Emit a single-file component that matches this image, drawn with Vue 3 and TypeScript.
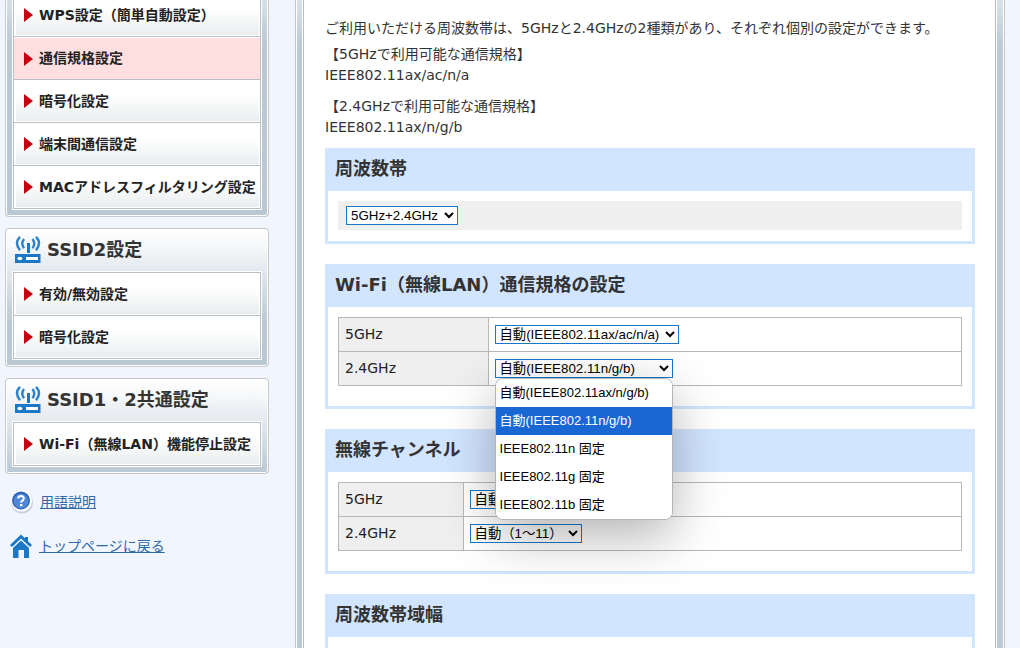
<script setup lang="ts">
import { ref } from 'vue'

interface MenuItem {
  label: string
  active?: boolean
}
interface MenuGroup {
  title?: string
  items: MenuItem[]
}

const groups: MenuGroup[] = [
  {
    items: [
      { label: 'WPS設定（簡単自動設定）' },
      { label: '通信規格設定', active: true },
      { label: '暗号化設定' },
      { label: '端末間通信設定' },
      { label: 'MACアドレスフィルタリング設定' },
    ],
  },
  { title: 'SSID2設定', items: [{ label: '有効/無効設定' }, { label: '暗号化設定' }] },
  { title: 'SSID1・2共通設定', items: [{ label: 'Wi-Fi（無線LAN）機能停止設定' }] },
]

const standards24 = [
  '自動(IEEE802.11ax/n/g/b)',
  '自動(IEEE802.11n/g/b)',
  'IEEE802.11n 固定',
  'IEEE802.11g 固定',
  'IEEE802.11b 固定',
]
const standard24 = ref(standards24[1])
const listOpen = ref(true)

function choose(option: string) {
  standard24.value = option
  listOpen.value = false
}
</script>

<template>
  <div class="page">
    <aside class="sidebar">
      <nav v-for="(group, g) in groups" :key="g" class="box" :class="{ continued: !group.title }">
        <h2 v-if="group.title" class="box-title">
          <svg class="router" viewBox="0 0 26 28" width="26" height="28" aria-hidden="true">
            <rect x="0" y="18" width="25.500" height="9" fill="#1a78c6" />
            <ellipse cx="4.800" cy="22.500" rx="2.500" ry="1.700" fill="#fff" />
            <rect x="11" y="21" width="12" height="3" fill="#fff" />
            <rect x="12" y="7" width="3" height="10" fill="#1a78c6" />
            <g fill="none" stroke="#2b82c9" stroke-width="2.400">
              <path d="M5 .8Q-1 7 5 14.200M9 3Q5.500 7.500 9 12.200" />
              <path d="M21 .8Q27 7 21 14.200M17.500 3Q21 7.500 17.500 12.200" />
            </g>
          </svg>
          {{ group.title }}
        </h2>
        <ul class="menu">
          <li v-for="item in group.items" :key="item.label">
            <a href="#" class="menu-link" :class="{ active: item.active }">{{ item.label }}</a>
          </li>
        </ul>
      </nav>

      <div class="links">
        <a href="#" class="help-link">
          <svg viewBox="0 0 24 26" width="24" height="26" aria-hidden="true">
            <circle cx="12" cy="13.500" r="11" fill="#b9c3d6" opacity=".7" />
            <circle cx="11.500" cy="12" r="10.500" fill="#fff" />
            <circle cx="11" cy="11.500" r="9" fill="#2c61b4" />
            <circle cx="11" cy="12" r="7.500" fill="#4f88d6" />
            <path d="M8.200 9.500Q8.200 7 11 7T13.800 9.500Q13.800 11 11.200 12.500V13.500" fill="none" stroke="#fff" stroke-width="2" />
            <rect x="10" y="15" width="2.400" height="2.200" fill="#fff" />
          </svg>
          <span>用語説明</span>
        </a>
        <a href="#" class="home-link">
          <svg viewBox="0 0 22 24" width="22" height="24" aria-hidden="true">
            <path d="M1 12L11 2.500L21 12" fill="none" stroke="#1a78c6" stroke-width="3" />
            <path d="M15 3h3v5h-3zM3 14l8-7.500L19 14v10h-5v-8H8.500v8H3z" fill="#1a78c6" />
          </svg>
          <span>トップページに戻る</span>
        </a>
      </div>
    </aside>

    <div class="frame">
      <div class="band">
        <main class="content">
          <p>ご利用いただける周波数帯は、5GHzと2.4GHzの2種類があり、それぞれ個別の設定ができます。</p>
          <p>【5GHzで利用可能な通信規格】<br />IEEE802.11ax/ac/n/a</p>
          <p>【2.4GHzで利用可能な通信規格】<br />IEEE802.11ax/n/g/b</p>

          <section class="panel">
            <h2>周波数帯</h2>
            <div class="panel-body tight">
              <div class="strip">
                <select aria-label="周波数帯">
                  <option>5GHz+2.4GHz</option>
                </select>
              </div>
            </div>
          </section>

          <section class="panel">
            <h2>Wi-Fi（無線LAN）通信規格の設定</h2>
            <div class="panel-body">
              <table class="wide-head">
                <tbody>
                  <tr>
                    <th scope="row"><label for="std5">5GHz</label></th>
                    <td>
                      <select id="std5">
                        <option>自動(IEEE802.11ax/ac/n/a)</option>
                      </select>
                    </td>
                  </tr>
                  <tr>
                    <th scope="row"><label for="std24">2.4GHz</label></th>
                    <td>
                      <div class="dropdown">
                        <select id="std24" v-model="standard24">
                          <option v-for="s in standards24" :key="s">{{ s }}</option>
                        </select>
                        <div v-if="listOpen" class="popup" role="listbox" aria-label="2.4GHz">
                          <button
                            v-for="s in standards24"
                            :key="s"
                            type="button"
                            role="option"
                            :aria-selected="s === standard24"
                            :class="{ chosen: s === standard24 }"
                            @click="choose(s)"
                          >{{ s }}</button>
                        </div>
                      </div>
                    </td>
                  </tr>
                </tbody>
              </table>
            </div>
          </section>

          <section class="panel">
            <h2>無線チャンネル</h2>
            <div class="panel-body">
              <table class="narrow-head">
                <tbody>
                  <tr>
                    <th scope="row"><label for="ch5">5GHz</label></th>
                    <td>
                      <select id="ch5">
                        <option>自動</option>
                      </select>
                    </td>
                  </tr>
                  <tr>
                    <th scope="row"><label for="ch24">2.4GHz</label></th>
                    <td>
                      <select id="ch24">
                        <option>自動（1～11）</option>
                      </select>
                    </td>
                  </tr>
                </tbody>
              </table>
            </div>
          </section>

          <section class="panel">
            <h2>周波数帯域幅</h2>
            <div class="panel-body"></div>
          </section>
        </main>
      </div>
    </div>
  </div>
</template>

<style>
body {
  margin: 0;
  background: #f0f5fe;
}
</style>

<style scoped>
* {
  box-sizing: border-box;
}
.page {
  display: flex;
  gap: 26px;
  height: 100vh;
  padding: 0 15px 0 5px;
  overflow: hidden;
  color: #333;
  font: 14px/21px "DejaVu Sans", "Noto Sans CJK JP", sans-serif;
}
.sidebar {
  flex: none;
  width: 264px;
}
.box {
  margin-bottom: 11px;
  padding: 0 6px 6px;
  border: 1px solid #c8c8c8;
  border-radius: 4px;
  background: linear-gradient(#fff 0, #f4f6f8 20px, #b9c8d3 95px);
  box-shadow: inset 0 0 0 1px #fff;
}
.box.continued {
  margin-top: -8px;
  border-top: 0;
  border-radius: 0 0 4px 4px;
  background: linear-gradient(#dce4ea 0, #b9c8d3 53px);
}
.box-title {
  display: flex;
  align-items: center;
  gap: 6px;
  height: 42px;
  margin: 0;
  padding: 0 0 1px 3px;
  font-size: 18px;
  line-height: 27px;
  white-space: nowrap;
}
.router {
  flex: none;
}
.menu {
  margin: 0;
  padding: 0;
  list-style: none;
  border: 1px solid #fff;
}
.menu li {
  border: 1px solid #b9bfc3;
  border-top: 0;
  background: #fff;
  padding: 1px 1px 1px 2px;
}
.menu li:first-child {
  border-top: 1px solid #b9bfc3;
}
.menu-link {
  display: flex;
  align-items: center;
  gap: 6px;
  height: 40px;
  padding-left: 8px;
  color: #222;
  font-weight: bold;
  text-decoration: none;
  white-space: nowrap;
  background: linear-gradient(#fff 35%, #e9edee);
}
.menu-link::before {
  content: "";
  border: solid transparent;
  border-width: 7px 0 7px 9px;
  border-left-color: #c7000f;
}
.menu li:has(.active) {
  padding: 1px 0 0;
}
.menu-link.active {
  height: 41px;
  padding-left: 10px;
  background: #ffdfe0;
}
.links {
  display: flex;
  flex-direction: column;
  gap: 18px;
  padding: 4px 5px 0;
}
.links a {
  display: flex;
  align-items: center;
  height: 26px;
  color: #2f6aa8;
}
.help-link {
  gap: 6px;
}
.home-link {
  gap: 7px;
}
.frame {
  flex: 1;
  min-width: 0;
  padding: 0 1px;
  border: solid #c4c4c4;
  border-width: 0 1px;
  background: #fff;
}
.band {
  height: 100%;
  padding: 0 6px 0 5px;
  background: linear-gradient(#dae2e9, #bccad5 45px);
}
.content {
  height: 100%;
  padding: 18px 21px 0 22px;
  border: solid #fff;
  border-width: 0 1px;
  background: #fff;
  box-shadow: inset 1px 0 #bbb, inset -1px 0 #bbb;
}
p {
  margin: 0 0 10px;
}
p:first-child {
  margin-bottom: 5px;
}
.panel {
  margin-bottom: 20px;
  border: solid #d2e5ff;
  border-width: 0 3px 3px;
}
.panel h2 {
  margin: 0;
  padding: 7px 7px 9px;
  background: #d2e5ff;
  font-size: 18px;
  line-height: 27px;
}
.panel-body {
  padding: 10px 10px 20px;
}
.panel-body.tight {
  padding-bottom: 11px;
}
.strip {
  display: flex;
  align-items: center;
  height: 29px;
  padding: 0 8px;
  background: #efefef;
}
table {
  width: 100%;
  border-collapse: collapse;
  table-layout: fixed;
  color: #222;
}
th,
td {
  height: 34px;
  padding: 0 6px;
  border: 1px solid #b8b8b8;
  text-align: left;
  font-weight: normal;
}
th {
  background: #efefef;
}
.wide-head th {
  width: 24%;
}
.narrow-head th {
  width: 20%;
}
select,
.popup button {
  font-family: "Liberation Sans", "Noto Sans CJK JP", sans-serif;
}
select {
  display: block;
  height: 19px;
  padding: 0 2px 0 0;
  border: 1px solid #1a78c6;
  border-radius: 0;
  background-color: #fff;
  color: #000;
}
.dropdown {
  position: relative;
  width: fit-content;
}
.popup {
  position: absolute;
  z-index: 2;
  top: 100%;
  left: 0;
  width: 100%;
  overflow: hidden;
  border: 1px solid #b4b4b4;
  border-radius: 8px;
  background: #fff;
  box-shadow: 0 16px 52px rgba(0, 0, 0, 0.3);
}
.popup button {
  display: block;
  width: 100%;
  height: 28px;
  padding: 0 4px 4px;
  border: 0;
  background: #fff;
  color: #000;
  font-size: 13px;
  text-align: left;
  white-space: nowrap;
}
.popup button.chosen {
  background: #1967d2;
  color: #fff;
}
</style>
